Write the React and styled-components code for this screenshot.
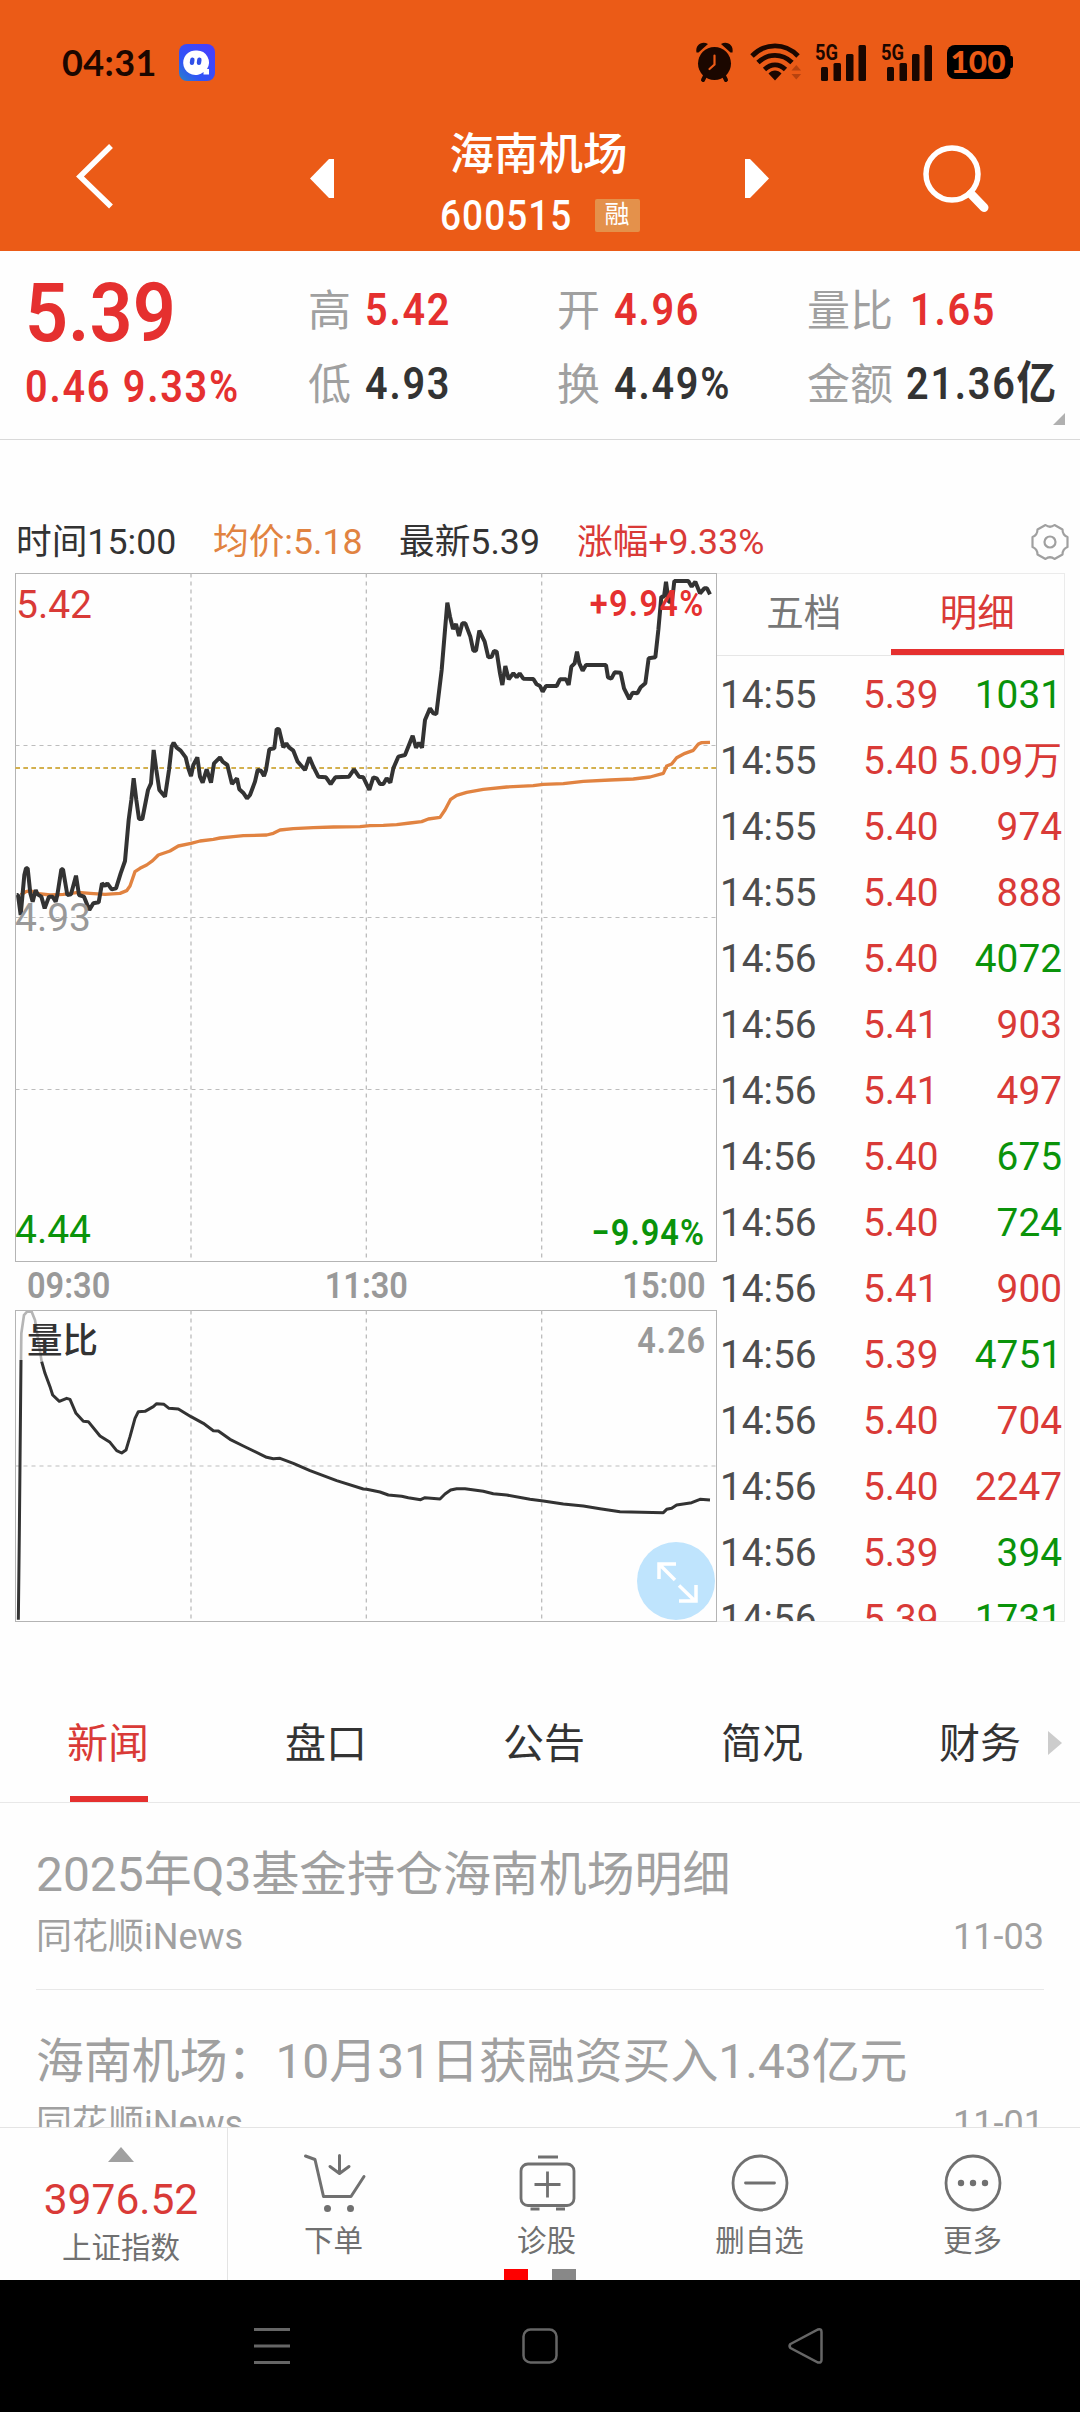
import React, { useState } from "react";
import styled, { createGlobalStyle } from "styled-components";

const RED = "#e5302f";
const TEXT_RED = "#d93a37";
const GREEN = "#0a930a";

const GlobalStyle = createGlobalStyle`
  * {
    box-sizing: border-box;
  }

  body {
    margin: 0;
    background: #fff;
    color: #333;
    font-family: Roboto, "Noto Sans CJK SC", sans-serif;
  }

  svg {
    display: block;
    overflow: visible;
  }
`;

const Screen = styled.div`
  width: 1080px;
  height: 2412px;
  display: flex;
  flex-direction: column;
  overflow: hidden;
  background: #fefefe;
`;

/* bold narrow figures used for quotes */
const Figure = styled.span`
  display: inline-block;
  font-weight: ${(p) => p.$weight || 600};
  font-size: ${(p) => p.$size}px;
  line-height: ${(p) => p.$size + 9}px;
  letter-spacing: ${(p) => p.$spacing || 0}px;
  color: ${(p) => p.$color || "inherit"};
  transform: scaleX(${(p) => p.$stretch || 0.88});
  transform-origin: ${(p) => p.$origin || "left"} center;
  white-space: nowrap;
`;

const Header = styled.header`
  height: 251px;
  flex: none;
  background: #eb5b17;
`;

const StatusBar = styled.div`
  height: 124px;
  padding: 0 65px 0 62px;
  display: flex;
  align-items: center;
  justify-content: space-between;
  color: #1b0700;
`;

const StatusGroup = styled.div`
  display: flex;
  align-items: center;
`;

const Clock = styled.span`
  width: 117px;
  font: 700 36px/40px Lato, sans-serif;
  letter-spacing: 0.4px;
`;

const Signal = styled.div`
  width: 66px;
`;

const Network = styled.text`
  font: 700 22px Roboto, sans-serif;
  fill: #1b0700;
`;

const BatteryText = styled.text`
  font: 900 31px Lato, sans-serif;
  fill: #eb5b17;
`;

const TitleBar = styled.div`
  height: 127px;
  display: grid;
  grid-template-columns: 310px 24px 411px 24px 311px;
`;

const HeaderIcon = styled.div`
  padding-top: ${(p) => p.$top}px;
  padding-left: ${(p) => p.$left || 0}px;
`;

const StockTitle = styled.div`
  display: flex;
  flex-direction: column;
  align-items: center;
  padding-top: 4px;
  color: #fff;
`;

const StockName = styled.div`
  height: 56px;
  margin-right: 2px;
  font-size: 44.5px;
  line-height: 54px;
  font-weight: 500;
`;

const StockCode = styled.div`
  width: 200px;
  display: flex;
  align-items: center;
  height: 62px;
`;

const CodeBox = styled.div`
  width: 155px;
`;

const MarginBadge = styled.span`
  width: 45px;
  height: 33px;
  border-radius: 2px;
  background: #e4914b;
  font-size: 25px;
  line-height: 32px;
  text-align: center;
`;

const Quote = styled.section`
  height: 189px;
  flex: none;
  display: grid;
  grid-template-columns: 283px 249px 250px 1fr;
  grid-template-rows: 74px 74px;
  padding: 22px 0 0 25px;
  border-bottom: 1px solid #d9d9d9;
`;

const QuoteCell = styled.div`
  display: flex;
  align-items: center;
  padding-top: ${(p) => p.$shift || 0}px;
  white-space: nowrap;
  color: ${(p) => p.$color};
`;

const QuoteLabel = styled.span`
  width: ${(p) => p.$width}px;
  margin-top: 2px;
  font-size: 43px;
  line-height: 60px;
  color: #a0a0a0;
`;

const CornerMark = styled.div`
  justify-self: end;
  grid-column: 4;
  margin-right: 15px;
  margin-top: -8px;
  width: 12px;
  height: 12px;
  background: #b0b0b0;
  clip-path: polygon(100% 0, 100% 100%, 0 100%);
`;

const InfoRow = styled.section`
  height: 133px;
  flex: none;
  display: flex;
  padding: 79px 11px 0 16px;
  font-size: 35.7px;
  line-height: 46px;
`;

const Info = styled.span`
  width: ${(p) => p.$width}px;
  color: ${(p) => p.$color || "#333"};
  white-space: nowrap;
`;

const GearButton = styled.div`
  margin: 4px 0 0 auto;
`;

const Market = styled.section`
  height: 1050px;
  flex: none;
  display: flex;
  padding-left: 15px;
`;

const Charts = styled.div`
  width: 702px;
`;

const ChartPanel = styled.div`
  position: relative;
  height: ${(p) => p.$height}px;
`;

const ChartLabel = styled.span`
  position: absolute;
  top: ${(p) => p.$top}px;
  ${(p) => p.$side || "left"}: ${(p) => p.$offset}px;
  font-size: ${(p) => p.$size || 39}px;
  font-weight: ${(p) => p.$weight || 400};
  line-height: 46px;
  color: ${(p) => p.$color};
`;

const TimeAxis = styled.div`
  height: 48px;
  padding: 0 11px 0 12px;
  display: flex;
  align-items: center;
  justify-content: space-between;
  color: #999;
`;

const ExpandButton = styled.div`
  position: absolute;
  right: 2px;
  bottom: 2px;
  width: 78px;
  height: 78px;
  border-radius: 50%;
  background: #bfe4fd;
`;

const Trades = styled.div`
  width: 348px;
  height: 1049px;
  overflow: hidden;
  border: 1px solid #ebebeb;
  border-left: none;
`;

const TradeTabs = styled.div`
  height: 82px;
  display: flex;
  border-bottom: 1px solid #e6e6e6;
`;

const TradeTab = styled.div`
  flex: 1;
  padding-top: 2px;
  text-align: center;
  font-size: 37.5px;
  line-height: 75px;
  color: ${(p) => (p.$active ? TEXT_RED : "#777")};
  border-bottom: 6px solid ${(p) => (p.$active ? RED : "transparent")};
`;

const TradeRow = styled.div`
  height: 66px;
  display: grid;
  grid-template-columns: 143px 80px 1fr;
  padding: 0 2px 0 3px;
  font-size: 38.8px;
  line-height: 77px;
  color: #4d4d4d;
  white-space: nowrap;
`;

const TradePrice = styled.span`
  color: ${TEXT_RED};
`;

const TradeVolume = styled.span`
  text-align: right;
  color: ${(p) => (p.$down ? GREEN : TEXT_RED)};
`;

const NewsTabs = styled.nav`
  height: 180px;
  flex: none;
  display: flex;
  padding: 79px 18px 0 67px;
  border-bottom: 1px solid #e8e8e8;
`;

const NewsTab = styled.div`
  width: ${(p) => p.$width}px;
  display: flex;
  flex-direction: column;
  justify-content: space-between;
  font-size: 41px;
  line-height: 84px;
  color: ${(p) => (p.$active ? TEXT_RED : "#333")};

  &::after {
    content: "";
    width: 78px;
    height: 6px;
    margin-left: 3px;
    background: ${(p) => (p.$active ? RED : "transparent")};
  }
`;

const MoreTabs = styled.div`
  width: 14px;
  height: 24px;
  margin-top: 29px;
  background: #ccc;
  clip-path: polygon(0 0, 100% 50%, 0 100%);
`;

const NewsList = styled.section`
  height: 324px;
  flex: none;
  overflow: hidden;
  padding: 0 36px;
`;

const NewsItem = styled.article`
  height: 187px;
  padding-top: 35px;
  border-bottom: 1px solid #e8e8e8;
  color: #a0a0a0;
`;

const NewsTitle = styled.div`
  font-size: 47.9px;
  line-height: 74px;
  white-space: nowrap;
`;

const NewsMeta = styled.div`
  display: flex;
  justify-content: space-between;
  font-size: 36px;
  line-height: 51px;
`;

const BottomBar = styled.footer`
  height: 153px;
  flex: none;
  display: flex;
  position: relative;
  border-top: 1px solid #e4e4e4;
`;

const IndexCell = styled.div`
  width: 228px;
  display: flex;
  flex-direction: column;
  align-items: center;
  padding: 19px 0 0 15px;
  border-right: 1px solid #e4e4e4;
`;

const UpMark = styled.div`
  width: 26px;
  height: 15px;
  background: #a0a0a0;
  clip-path: polygon(50% 0, 100% 100%, 0 100%);
`;

const IndexValue = styled.div`
  margin-top: 13px;
  margin-bottom: 3px;
  font-size: 42.5px;
  line-height: 50px;
  color: ${TEXT_RED};
`;

const Caption = styled.div`
  font-size: 29.5px;
  line-height: 40px;
  color: #707070;
`;

const Action = styled.div`
  flex: 1;
  display: flex;
  flex-direction: column;
  align-items: center;
  padding-top: 23px;
  padding-right: 2px;

  svg {
    margin-bottom: 6px;
  }
`;

const PageDots = styled.div`
  position: absolute;
  left: 504px;
  bottom: 0;
  display: flex;
  gap: 24px;
`;

const PageDot = styled.span`
  width: 24px;
  height: 11px;
  background: ${(p) => (p.$active ? "#fe0000" : "#888")};
`;

const SystemNav = styled.div`
  flex: 1;
  display: grid;
  grid-template-columns: 268px 266px 1fr;
  padding: 47px 0 0 254px;
  background: #000;
`;

// chart coordinates are in thirds of a pixel
const PRICE_LINE =
  "50,1005 54,1005 62,1065 73,945 78,925 83,925 91,1000 98,1025 107,990 113,1003 124,1010 134,1045 147,1010 158,1010 167,1025 172,1005 184,928 189,928 202,1005 213,1003 228,947 237,1005 252,1010 268,1050 280,1030 296,1027 306,970 315,978 322,970 335,988 348,985 362,940 375,903 386,780 394,720 401,655 409,720 417,777 427,777 444,690 453,670 461,570 469,630 478,690 495,710 507,630 515,560 521,548 530,563 542,572 557,592 565,625 573,648 580,615 592,592 600,650 608,668 620,628 633,668 642,610 660,592 668,605 682,615 696,672 711,655 718,688 731,700 741,715 750,705 765,665 773,630 783,632 792,648 798,630 808,568 823,565 830,507 837,508 850,562 859,550 867,562 880,572 893,605 915,630 928,592 940,620 955,650 978,652 992,672 1006,652 1047,650 1062,628 1077,650 1090,652 1108,690 1120,652 1130,655 1140,672 1150,672 1160,655 1171,668 1180,625 1195,590 1215,585 1238,527 1248,563 1257,548 1266,563 1275,480 1290,445 1300,460 1309,462 1325,330 1335,210 1342,128 1350,170 1359,207 1368,192 1377,228 1387,190 1396,190 1411,230 1420,272 1428,272 1438,212 1454,245 1465,292 1475,290 1482,273 1490,275 1500,340 1507,375 1516,318 1526,358 1540,340 1550,352 1559,340 1570,356 1600,357 1610,373 1620,378 1628,395 1638,378 1670,378 1680,358 1698,358 1706,375 1714,320 1724,310 1731,275 1738,310 1748,332 1758,315 1818,315 1824,352 1834,356 1844,337 1862,338 1872,385 1888,417 1898,398 1912,400 1922,382 1936,370 1946,295 1966,292 1975,210 1984,110 1992,110 1998,65 2006,125 2016,125 2023,63 2065,63 2075,80 2086,65 2100,100 2113,85 2121,85 2130,103";

const AVERAGE_LINE =
  "62,1005 78,995 92,992 110,1000 150,1005 190,1003 235,997 270,1000 315,1003 360,1000 380,992 390,978 405,935 420,925 440,915 458,902 475,885 510,873 535,858 573,850 600,843 640,838 660,834 700,830 730,827 800,825 820,820 840,810 880,806 940,803 1000,801 1080,800 1110,797 1150,796 1190,794 1230,789 1265,785 1285,777 1320,772 1335,750 1352,718 1370,706 1400,697 1450,688 1520,681 1600,677 1630,673 1690,671 1750,664 1830,660 1900,657 1950,651 1990,640 2000,618 2015,612 2030,593 2055,580 2080,571 2095,552 2105,548 2130,547";

const RATIO_LINE =
  "125,485 135,520 150,560 158,585 178,604 200,595 210,598 228,640 250,664 265,665 300,708 330,727 350,752 365,759 378,750 390,710 405,655 415,635 435,634 460,620 470,611 492,613 507,625 535,627 573,650 610,670 640,692 655,693 690,718 730,738 800,772 820,776 840,775 880,790 930,812 1010,842 1090,867 1100,868 1140,876 1165,885 1205,889 1225,893 1262,899 1275,893 1320,897 1335,882 1352,870 1370,866 1395,866 1450,874 1480,881 1520,885 1590,898 1630,903 1690,912 1750,918 1800,926 1860,935 1990,938 2000,928 2015,925 2030,915 2075,908 2100,898 2130,900";

const QUOTES = [
  { label: "高", value: "5.42", color: RED, width: 57 },
  { label: "开", value: "4.96", color: RED, width: 57 },
  { label: "量比", value: "1.65", color: RED, width: 103 },
  { label: "低", value: "4.93", color: "#333", width: 57 },
  { label: "换", value: "4.49%", color: "#333", width: 57 },
  { label: "金额", value: "21.36", unit: "亿", color: "#333", width: 99 },
];

const TRADES = [
  ["14:55", "5.39", "1031", true],
  ["14:55", "5.40", "5.09万", false],
  ["14:55", "5.40", "974", false],
  ["14:55", "5.40", "888", false],
  ["14:56", "5.40", "4072", true],
  ["14:56", "5.41", "903", false],
  ["14:56", "5.41", "497", false],
  ["14:56", "5.40", "675", true],
  ["14:56", "5.40", "724", true],
  ["14:56", "5.41", "900", false],
  ["14:56", "5.39", "4751", true],
  ["14:56", "5.40", "704", false],
  ["14:56", "5.40", "2247", false],
  ["14:56", "5.39", "394", true],
  ["14:56", "5.39", "1731", true],
];

const NEWS = [
  { title: "2025年Q3基金持仓海南机场明细", source: "同花顺iNews", date: "11-03" },
  { title: "海南机场：10月31日获融资买入1.43亿元", source: "同花顺iNews", date: "11-01" },
];

function AppBadge() {
  return (
    <svg width="36" height="37" viewBox="0 0 36 37">
      <defs>
        <linearGradient id="badge" x1="0" y1="1" x2="1" y2="0">
          <stop offset="0" stopColor="#2b86c4" />
          <stop offset="0.3" stopColor="#2f55f5" />
          <stop offset="1" stopColor="#4a3cff" />
        </linearGradient>
      </defs>
      <rect width="36" height="37" rx="8" fill="url(#badge)" />
      <path d="M18 6.500a12 12 0 0 1 10 18.500h2v5.500h-5.500v-2.500A12.300 12.300 0 1 1 18 6.500z" fill="#fff" />
      <rect x="11" y="13.500" width="4.400" height="7.500" rx="2.200" fill="#3050e8" transform="rotate(8 13 17)" />
      <rect x="18" y="13.500" width="4.400" height="7.500" rx="2.200" fill="#3050e8" transform="rotate(8 20 17)" />
    </svg>
  );
}

function AlarmIcon() {
  return (
    <svg width="54" height="40" viewBox="0 0 54 40" fill="#1b0700">
      <circle cx="18.500" cy="21.500" r="16.500" />
      <path d="M0.500 10.500C-1 3 6 -1.500 12 2L2.500 10.500zM36.500 10.500C38 3 31 -1.500 25 2l9.500 8.500z" />
      <path d="M9 34l-2 4M28 34l2 4" stroke="#1b0700" strokeWidth="4" strokeLinecap="round" />
      <path d="M18.500 13.500v9l-5 4.500" fill="none" stroke="#eb5b17" strokeWidth="2.200" strokeLinecap="round" />
    </svg>
  );
}

function WifiIcon() {
  return (
    <svg width="65" height="40" viewBox="0 0 65 40" fill="none" stroke="#1b0700" strokeWidth="4.800">
      <path d="M2 14C15 .5 35 .5 48 14" />
      <path d="M8 20.500C18 11 32 11 42 20.500" />
      <path d="M14.500 27.500C21 21.500 29 21.500 35.500 27.500" />
      <path d="M18.500 31.500C22 27.500 28 27.500 31.500 31.500L25 38.500z" fill="#1b0700" stroke="none" />
      <path d="M41.500 28.500l4.800-5.500 4.800 5.500zM41.500 32l4.800 5.500 4.800-5.500z" fill="#b8430f" stroke="none" />
    </svg>
  );
}

function SignalIcon() {
  return (
    <Signal>
      <svg width="56" height="40" viewBox="0 0 56 40" fill="#1b0700">
        <Network x="0" y="17.500" textLength="23" lengthAdjust="spacingAndGlyphs">5G</Network>
        <rect x="6" y="25" width="7" height="14" rx="1.500" />
        <rect x="18.500" y="21" width="7.500" height="18" rx="1.500" />
        <rect x="31" y="12" width="7.500" height="27" rx="1.500" />
        <rect x="43.500" y="3" width="7.500" height="36" rx="1.500" />
      </svg>
    </Signal>
  );
}

function BatteryIcon() {
  return (
    <svg width="68" height="34" viewBox="0 0 68 34">
      <rect width="63.500" height="34" rx="8" fill="#000" />
      <path d="M63 11h1.500q1.500 0 1.500 2v8q0 2-1.500 2h-1.500z" fill="#000" />
      <BatteryText x="3.500" y="28" textLength="55" lengthAdjust="spacingAndGlyphs">100</BatteryText>
    </svg>
  );
}

function Grid({ width, top, bottom, middle }) {
  const left = 46.5;
  return (
    <g fill="none" stroke="#b4b4b4" strokeWidth="3">
      <rect x={left} y={top} width={width} height={bottom - top} />
      <g strokeDasharray="12 12" stroke="#bdbdbd">
        {[573, 1099, 1625].map((x) => (
          <path key={x} d={`M${x} ${top}V${bottom}`} strokeWidth="4" />
        ))}
        {middle.map((y) => (
          <path key={y} d={`M${left} ${y}H${left + width}`} />
        ))}
      </g>
    </g>
  );
}

function PriceChart() {
  return (
    <ChartPanel $height={689}>
      <svg width="702" height="689" viewBox="45 39 2106 2067" fill="none">
        <Grid width={2103} top={40.5} bottom={2104.5} middle={[556.5, 1072.5, 1588.5]} />
        <path d="M46 624H2149" stroke="#d3b04e" strokeWidth="6" strokeDasharray="14 10" />
        <polyline points={AVERAGE_LINE} stroke="#e18341" strokeWidth="10" strokeLinejoin="round" />
        <polyline points={PRICE_LINE} stroke="#333" strokeWidth="12" strokeLinejoin="bevel" />
      </svg>
      <ChartLabel $top={9} $offset={1} $color={TEXT_RED}>5.42</ChartLabel>
      <ChartLabel $top={322} $offset={0} $color="#999">4.93</ChartLabel>
      <ChartLabel $top={634} $offset={0} $color={GREEN}>4.44</ChartLabel>
      <ChartLabel $top={7} $offset={12} $side="right" $color={RED}>
        <Figure $size={37} $spacing={1.5} $origin="right">+9.94%</Figure>
      </ChartLabel>
      <ChartLabel $top={636} $offset={12} $side="right" $color={GREEN}>
        <Figure $size={37} $spacing={1.2} $origin="right">−9.94%</Figure>
      </ChartLabel>
    </ChartPanel>
  );
}

function RatioChart() {
  return (
    <ChartPanel $height={312}>
      <svg width="702" height="312" viewBox="45 330 2106 936" fill="none">
        <Grid width={2103} top={331.5} bottom={1264.5} middle={[798]} />
        <path d="M55 1259L58 1000L63 480" stroke="#333" strokeWidth="9" />
        <path d="M63 480L64 400L72 345L82 334L95 335L105 360L118 440L125 485" stroke="#b5b5b5" strokeWidth="8" />
        <polyline points={RATIO_LINE} stroke="#333" strokeWidth="9" strokeLinejoin="round" />
      </svg>
      <ChartLabel $top={8} $offset={12} $size={35.5} $weight={500} $color="#333">量比</ChartLabel>
      <ChartLabel $top={7} $offset={11} $side="right" $color="#999">
        <Figure $size={37} $spacing={1} $origin="right">4.26</Figure>
      </ChartLabel>
      <ExpandButton>
        <svg width="78" height="78" viewBox="0 0 78 78" fill="none" stroke="#fff" strokeWidth="3.500">
          <path d="M22 37V22h17M22 22l16 16M42 43.500L58 59M59 43v16H42" />
        </svg>
      </ExpandButton>
    </ChartPanel>
  );
}

function QuoteItem({ label, value, unit, color, width }) {
  return (
    <QuoteCell $color={color}>
      <QuoteLabel $width={width}>{label}</QuoteLabel>
      <Figure $size={45} $spacing={2}>
        {value}
        {unit}
      </Figure>
    </QuoteCell>
  );
}

function App() {
  const [tradeTab, setTradeTab] = useState("明细");
  const [newsTab, setNewsTab] = useState("新闻");

  return (
    <Screen>
      <GlobalStyle />
      <Header>
        <StatusBar>
          <StatusGroup>
            <Clock>04:31</Clock>
            <AppBadge />
          </StatusGroup>
          <StatusGroup>
            <AlarmIcon />
            <WifiIcon />
            <SignalIcon />
            <SignalIcon />
            <BatteryIcon />
          </StatusGroup>
        </StatusBar>
        <TitleBar>
          <HeaderIcon $top={20} $left={76}>
            <svg width="38" height="65" viewBox="0 0 38 65" fill="none" stroke="#fff" strokeWidth="5.500">
              <path d="M35 2L4 32.500 35 62.500" />
            </svg>
          </HeaderIcon>
          <HeaderIcon $top={35}>
            <svg width="24" height="39" viewBox="0 0 24 39" fill="#fff">
              <path d="M0 19.500L19 0h5v39h-5z" />
            </svg>
          </HeaderIcon>
          <StockTitle>
            <StockName>海南机场</StockName>
            <StockCode>
              <CodeBox>
                <Figure $size={42} $spacing={1.2} $weight={500}>600515</Figure>
              </CodeBox>
              <MarginBadge>融</MarginBadge>
            </StockCode>
          </StockTitle>
          <HeaderIcon $top={35}>
            <svg width="24" height="39" viewBox="0 0 24 39" fill="#fff">
              <path d="M24 19.500L5 0H0v39h5z" />
            </svg>
          </HeaderIcon>
          <HeaderIcon $top={20} $left={154}>
            <svg width="68" height="70" viewBox="0 0 68 70" fill="none" stroke="#fff">
              <circle cx="29" cy="30" r="26" strokeWidth="5.500" />
              <path d="M48 50l13 13.500" strokeWidth="9" strokeLinecap="round" />
            </svg>
          </HeaderIcon>
        </TitleBar>
      </Header>

      <Quote>
        <QuoteCell $color={RED} $shift={7}>
          <Figure $size={82} $stretch={0.92}>5.39</Figure>
        </QuoteCell>
        {QUOTES.slice(0, 3).map((q) => (
          <QuoteItem key={q.label} {...q} />
        ))}
        <QuoteCell $color={RED} $shift={5}>
          <Figure $size={45} $spacing={2}>0.46 9.33%</Figure>
        </QuoteCell>
        {QUOTES.slice(3).map((q) => (
          <QuoteItem key={q.label} {...q} />
        ))}
        <CornerMark />
      </Quote>

      <InfoRow>
        <Info $width={197}>时间15:00</Info>
        <Info $width={186} $color="#e18341">均价:5.18</Info>
        <Info $width={178}>最新5.39</Info>
        <Info $width={200} $color={TEXT_RED}>涨幅+9.33%</Info>
        <GearButton>
          <svg width="38" height="38" viewBox="0 0 38 38" fill="none" stroke="#a0a0a0" strokeWidth="2.200" strokeLinejoin="round">
            <path d="M23.500 2L31.500 6.500Q31.500 12 36.500 14V24Q31.500 26 31.500 31.500L23.500 36Q19 32.500 14.500 36L6.500 31.500Q6.500 26 1.500 24V14Q6.500 12 6.500 6.500L14.500 2Q19 5.500 23.500 2z" />
            <circle cx="19" cy="19" r="5.500" />
          </svg>
        </GearButton>
      </InfoRow>

      <Market>
        <Charts>
          <PriceChart />
          <TimeAxis>
            <Figure $size={37}>09:30</Figure>
            <Figure $size={37} $origin="center">11:30</Figure>
            <Figure $size={37} $origin="right">15:00</Figure>
          </TimeAxis>
          <RatioChart />
        </Charts>
        <Trades>
          <TradeTabs>
            {["五档", "明细"].map((tab) => (
              <TradeTab key={tab} $active={tab === tradeTab} onClick={() => setTradeTab(tab)}>
                {tab}
              </TradeTab>
            ))}
          </TradeTabs>
          {TRADES.map(([time, price, volume, down], i) => (
            <TradeRow key={i}>
              <span>{time}</span>
              <TradePrice>{price}</TradePrice>
              <TradeVolume $down={down}>{volume}</TradeVolume>
            </TradeRow>
          ))}
        </Trades>
      </Market>

      <NewsTabs>
        {["新闻", "盘口", "公告", "简况", "财务"].map((tab, i) => (
          <NewsTab
            key={tab}
            $width={i === 4 ? 109 : 218}
            $active={tab === newsTab}
            onClick={() => setNewsTab(tab)}
          >
            {tab}
          </NewsTab>
        ))}
        <MoreTabs />
      </NewsTabs>
      <NewsList>
        {NEWS.map((item) => (
          <NewsItem key={item.date}>
            <NewsTitle>{item.title}</NewsTitle>
            <NewsMeta>
              <span>{item.source}</span>
              <span>{item.date}</span>
            </NewsMeta>
          </NewsItem>
        ))}
      </NewsList>

      <BottomBar>
        <IndexCell>
          <UpMark />
          <IndexValue>3976.52</IndexValue>
          <Caption>上证指数</Caption>
        </IndexCell>
        <Action>
          <svg width="64" height="64" viewBox="0 0 64 64" fill="none" stroke="#707070" strokeWidth="3" strokeLinecap="round" strokeLinejoin="round">
            <path d="M3.500 5l9.500 3.500 8.500 37H49l13-20M37.500 4.500v17M28 15.500l9.500 7 9.500-7" />
            <circle cx="25.500" cy="57.500" r="2" fill="#707070" />
            <circle cx="48.500" cy="57.500" r="2" fill="#707070" />
          </svg>
          <Caption>下单</Caption>
        </Action>
        <Action>
          <svg width="64" height="64" viewBox="0 0 64 64" fill="none" stroke="#707070" strokeWidth="2.800">
            <rect x="6" y="13" width="53" height="41.500" rx="7" />
            <path d="M23 6h20M15.500 58h9M41 58h9M19.500 33.500h26M32.500 20.500v26" />
          </svg>
          <Caption>诊股</Caption>
        </Action>
        <Action>
          <svg width="64" height="64" viewBox="0 0 64 64" fill="none" stroke="#707070" strokeWidth="2.800" strokeLinecap="round">
            <circle cx="32" cy="32" r="27" />
            <path d="M17.500 32h29" />
          </svg>
          <Caption>删自选</Caption>
        </Action>
        <Action>
          <svg width="64" height="64" viewBox="0 0 64 64" fill="none" stroke="#707070" strokeWidth="2.800">
            <circle cx="32" cy="32" r="27" />
            <g fill="#707070" stroke="none">
              <circle cx="20" cy="32" r="3.200" />
              <circle cx="32" cy="32" r="3.200" />
              <circle cx="44" cy="32" r="3.200" />
            </g>
          </svg>
          <Caption>更多</Caption>
        </Action>
        <PageDots>
          <PageDot $active />
          <PageDot />
        </PageDots>
      </BottomBar>

      <SystemNav>
        <svg width="36" height="38" viewBox="0 0 36 38" stroke="#666" strokeWidth="3">
          <path d="M0 2.500h36M0 19h36M0 35.500h36" />
        </svg>
        <svg width="36" height="38" viewBox="0 0 36 38" fill="none" stroke="#666" strokeWidth="2.500">
          <rect x="1.500" y="2.500" width="33" height="33" rx="7" />
        </svg>
        <svg width="36" height="38" viewBox="0 0 36 38" fill="none" stroke="#666" strokeWidth="2.500">
          <path d="M2.500 17L30 2.500Q33.500 1.500 33.500 5v28Q33.500 36 30 35.500L2.500 21Q.5 19 2.500 17z" />
        </svg>
      </SystemNav>
    </Screen>
  );
}

export default App;
